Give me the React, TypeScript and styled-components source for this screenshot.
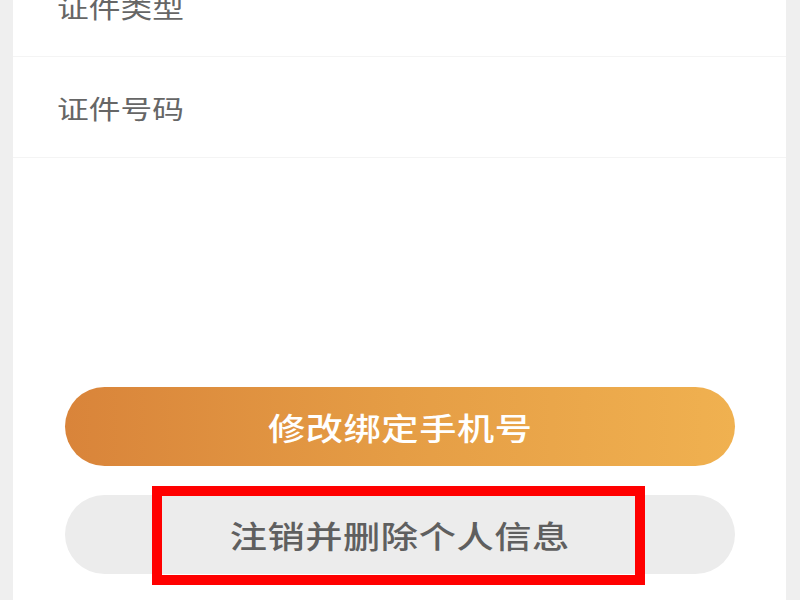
import { createGlobalStyle, styled } from "styled-components";

const GlobalStyle = createGlobalStyle`
  html, body {
    margin: 0;
    padding: 0;
    background: #efefef;
    overflow: hidden;
  }
  body {
    font-family: "Noto Sans CJK SC", "Noto Sans", sans-serif;
  }
`;

const Page = styled.div`
  padding: 0 14px 0 13px;
  height: 600px;
  overflow: hidden;
`;

// the list is scrolled: its first row sits partly above the top edge
const Card = styled.div`
  background: #ffffff;
  margin-top: -44px;
  height: 660px;
`;

const Row = styled.div`
  height: 100px;
  display: flex;
  align-items: center;
  padding-left: 44px;
  border-bottom: 1px solid #f4f4f4;
`;

const Label = styled.span`
  display: inline-block;
  font-size: 26px;
  color: #666666;
  transform: scaleX(1.22);
  transform-origin: left center;
`;

const Actions = styled.div`
  display: flex;
  flex-direction: column;
  gap: 29px;
  padding: 229px 51px 0 52px;
`;

const Button = styled.div<{ $primary?: boolean }>`
  position: relative;
  height: 79px;
  border-radius: 40px;
  display: flex;
  align-items: center;
  justify-content: center;
  background: ${(p) =>
    p.$primary ? "linear-gradient(90deg, #d9843a 0%, #e59d45 50%, #f0b150 100%)" : "#ececec"};
  color: ${(p) => (p.$primary ? "#ffffff" : "#5f5f5f")};
`;

const ButtonText = styled.span`
  display: inline-block;
  font-size: 31px;
  font-weight: 500;
  letter-spacing: 0.5px;
  transform: scaleX(1.2);
`;

const Highlight = styled.div`
  position: absolute;
  left: 87px;
  top: -9px;
  width: 493px;
  height: 99px;
  box-sizing: border-box;
  border: 10px solid #ff0000;
  pointer-events: none;
`;

export default function App() {
  return (
    <>
      <GlobalStyle />
      <Page>
        <Card>
          <Row>
            <Label>证件类型</Label>
          </Row>
          <Row>
            <Label>证件号码</Label>
          </Row>
          <Actions>
            <Button $primary>
              <ButtonText>修改绑定手机号</ButtonText>
            </Button>
            <Button>
              <ButtonText>注销并删除个人信息</ButtonText>
              <Highlight />
            </Button>
          </Actions>
        </Card>
      </Page>
    </>
  );
}
